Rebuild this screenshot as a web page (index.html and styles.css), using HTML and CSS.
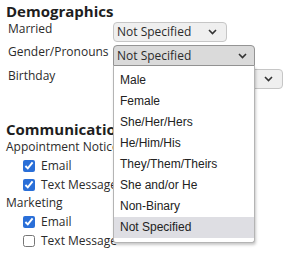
FILE: index.html
```html
<!DOCTYPE html>
<html lang="en">
<head>
    <meta charset="UTF-8">
    <meta name="viewport" content="width=device-width, initial-scale=1.0">
    <title>Profile</title>
    <link rel="stylesheet" href="styles.css">
</head>
<body>
    <div class="page">
        <h2 class="section-title">Demographics</h2>
        <div class="fields">
            <div class="field-label">Married</div>
            <div class="select">
                <span>Not Specified</span>
                <svg class="chevron" width="9" height="6" viewBox="0 0 9 6"><path d="M1 1l3.5 3.5L8 1" fill="none" stroke="#333" stroke-width="1.6"/></svg>
            </div>

            <div class="field-label">Gender/Pronouns</div>
            <div class="select-wrap">
                <div class="select select-open">
                    <span>Not Specified</span>
                    <svg class="chevron" width="9" height="6" viewBox="0 0 9 6"><path d="M1 1l3.5 3.5L8 1" fill="none" stroke="#333" stroke-width="1.6"/></svg>
                </div>
                <ul class="menu">
                    <li>Male</li>
                    <li>Female</li>
                    <li>She/Her/Hers</li>
                    <li>He/Him/His</li>
                    <li>They/Them/Theirs</li>
                    <li>She and/or He</li>
                    <li>Non-Binary</li>
                    <li class="active">Not Specified</li>
                </ul>
            </div>

            <div class="field-label">Birthday</div>
            <div class="select select-wide">
                <span></span>
                <svg class="chevron" width="9" height="6" viewBox="0 0 9 6"><path d="M1 1l3.5 3.5L8 1" fill="none" stroke="#333" stroke-width="1.6"/></svg>
            </div>
        </div>

        <h2 class="section-title comm">Communication</h2>
        <div class="group-label">Appointment Notice</div>
        <label class="check"><input type="checkbox" checked> Email</label>
        <label class="check"><input type="checkbox" checked> Text Message</label>
        <div class="group-label">Marketing</div>
        <label class="check"><input type="checkbox" checked> Email</label>
        <label class="check"><input type="checkbox"> Text Message</label>
    </div>
</body>
</html>
```

FILE: styles.css
```css
:root {
    --text: #2b2b2b;
    --select-bg: #efefef;
    --select-border: #c6c6c6;
    --check: #2a6fd8;
}

body {
    font-family: "Open Sans", "DejaVu Sans", sans-serif;
    font-size: 12px;
    margin: 0;
    color: var(--text);
    background: #ffffff;
    overflow: hidden;
}

.page {
    padding: 1px 0 0 6px;
}

.section-title {
    font-size: 15px;
    font-weight: bold;
    line-height: 20px;
    margin: 0;
    color: #1e1e1e;
}

.fields {
    display: grid;
    grid-template-columns: 107px auto;
    row-gap: 3px;
    margin-top: 1px;
}

.field-label {
    padding-left: 2px;
    line-height: 17px;
    margin-top: -2px;
}

.select {
    display: flex;
    align-items: center;
    justify-content: space-between;
    box-sizing: border-box;
    width: 114px;
    height: 20px;
    padding: 0 9px 0 3px;
    background: var(--select-bg);
    border: 1px solid var(--select-border);
    border-radius: 4px;
    line-height: 18px;
}

.select-wrap {
    position: relative;
}

.select-open {
    width: 142px;
    height: 21px;
    padding-right: 7px;
    background: #dadada;
    border-color: #949494;
    border-radius: 4px 4px 0 0;
}

.select-wide {
    width: 170px;
}

.chevron {
    flex: none;
}

.menu {
    position: absolute;
    top: 21px;
    left: 0;
    width: 142px;
    box-sizing: border-box;
    margin: 0;
    padding: 4px 0;
    list-style: none;
    background: #ffffff;
    border: 1px solid #b4b4b4;
    border-top: none;
    border-radius: 0 0 3px 3px;
    box-shadow: 1px 2px 3px rgba(0, 0, 0, 0.22);
    font-family: "Liberation Sans", Arial, sans-serif;
    font-size: 12px;
    color: #222222;
    z-index: 2;
}

.menu li {
    height: 21px;
    line-height: 21px;
    padding-left: 6px;
}

.menu .active {
    background: #dedee3;
}

.comm {
    margin-top: 32px;
    margin-bottom: 2px;
    line-height: 16px;
}

.group-label {
    line-height: 16px;
}

.check + .group-label {
    margin-top: 1px;
}

.group-label + .check {
    margin-top: 1px;
}

.check {
    display: flex;
    align-items: center;
    gap: 6px;
    height: 19px;
    padding-left: 17px;
}

.check input {
    margin: 0;
    width: 12px;
    height: 12px;
    accent-color: var(--check);
}
```
